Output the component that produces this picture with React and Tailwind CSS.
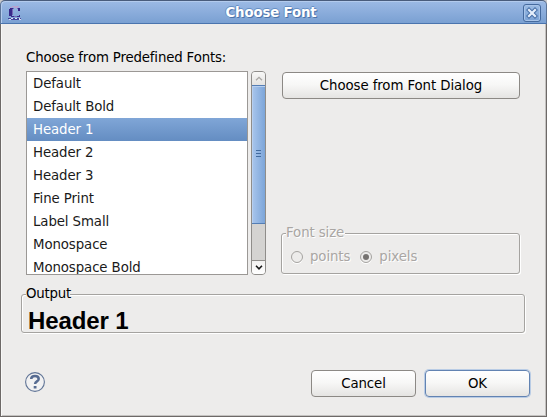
import React from "react";

const fonts = [
  "Default",
  "Default Bold",
  "Header 1",
  "Header 2",
  "Header 3",
  "Fine Print",
  "Label Small",
  "Monospace",
  "Monospace Bold",
];

function TitleBar() {
  return (
    <header className="flex h-6 shrink-0 items-center rounded-t-[5px] border border-b-[#4a74ae] border-t-[#495c7c] border-x-[#5c7599] bg-linear-to-b from-[#9cbae5] to-[#7aa0d2] pl-[7px] pr-[5px] shadow-[inset_1px_1px_0_#b3cbed]">
      <svg className="mt-px h-[14px] w-[14px] shrink-0" viewBox="0 0 14 14" shapeRendering="crispEdges">
        <path d="M4 0h7v1H4zM2 1h2v1H2zM6 1h4v1H6z" fill="#b7a2d0" />
        <path d="M1 3h3v7H1zM2 2h3v1H2zM10 2h2v3h-2zM3 10h3v1H3zM9 10h3v1H9zM11 9h1v1h-1z" fill="#38298a" />
        <path d="M5 2h1v1H5zM4 3h1v6H4zM9 2h1v1H9zM6 10h3v1H6z" fill="#7568b5" />
        <path d="M0 12h3v1H0zM5 12h2v1H5zM9 12h2v1H9zM12 12h1v1h-1zM3 13h8v1H3z" fill="#43469b" />
        <path d="M3 12h2v1H3zM7 12h2v1H7zM11 12h1v1h-1zM1 13h2v1H1zM11 13h2v1h-2z" fill="#d7dcf1" />
      </svg>
      <h1 className="relative top-px mr-[3px] flex-1 text-center text-[13.33px] leading-[22px] font-bold tracking-[-0.15px] text-white [text-shadow:1px_1px_0_#4c73a9,-1px_0_0_#668fc5,0_-1px_0_#668fc5]">
        Choose Font
      </h1>
      <button aria-label="Close" className="mt-px flex size-[18px] items-center justify-center rounded-[3px] border border-[#456a9e] bg-linear-to-b from-[#9bbbe4] to-[#7ba2d4] shadow-[inset_0_0_0_1px_#a8c4e9]">
        <svg className="size-3" viewBox="0 0 12 12">
          <path d="M3 3l6 6M9 3l-6 6" stroke="#476fa6" strokeWidth="4.2" strokeLinecap="square" />
          <path d="M3 3l6 6M9 3l-6 6" stroke="#e6effb" strokeWidth="2.2" strokeLinecap="square" />
        </svg>
      </button>
    </header>
  );
}

function Scrollbar() {
  return (
    <div className="ml-[3px] flex h-[204px] w-[15px] flex-col overflow-hidden rounded-[4px] border border-[#8f8d8a] bg-[#d4d3d1]">
      <div className="flex h-[13px] items-center justify-center bg-linear-to-b from-[#f8f8f7] to-[#e4e3e1]">
        <svg className="h-[5px] w-[8px]" viewBox="0 0 8 5" fill="none">
          <path d="M1 4.3L4 1.3l3 3" stroke="#aaa8a5" strokeWidth="1.3" />
        </svg>
      </div>
      <div className="-mx-px flex h-[139px] flex-col items-center justify-center gap-[2px] border border-[#547eb5] bg-linear-to-r from-[#a9c6ec] to-[#7ca5d9] pb-[2px] shadow-[inset_1px_1px_0_#b7cfef]">
        <i className="h-px w-[5px] bg-[#426b9f]" />
        <i className="h-px w-[5px] bg-[#426b9f]" />
        <i className="h-px w-[5px] bg-[#426b9f]" />
      </div>
      <div className="flex-1" />
      <div className="flex h-[14px] items-center justify-center border-t border-[#8f8d8a] bg-linear-to-b from-[#f2f1f0] to-white">
        <svg className="h-[5px] w-[8px]" viewBox="0 0 8 5" fill="none">
          <path d="M1 .8l3 3 3-3" stroke="#181818" strokeWidth="1.6" />
        </svg>
      </div>
    </div>
  );
}

function Button({ children, className }) {
  return (
    <button className={"flex h-[27px] items-center justify-center rounded-[4px] border bg-linear-to-b from-white from-0% via-[#f7f7f6] via-48% to-[#e5e4e2] to-100% tracking-[-0.09px] text-black " + className}>
      {children}
    </button>
  );
}

function Radio({ label, checked }) {
  return (
    <label className="flex items-center gap-[7px]">
      <span className="flex size-3 items-center justify-center rounded-full border border-[#a5a3a0] shadow-[0_1px_0_#fff]">
        {checked && <i className="size-[6px] rounded-full bg-[#767371]" />}
      </span>
      <span className="leading-4">{label}</span>
    </label>
  );
}

export default function App() {
  return (
    <div className="h-[417px] w-[547px] overflow-hidden bg-[#c9c9ca] font-['DejaVu_Sans',sans-serif] text-[13.33px] text-black">
      <div className="flex h-full flex-col">
        <TitleBar />
        <main className="flex flex-1 flex-col border-x border-b border-[#6d6967] bg-[#edeceb] shadow-[inset_1px_0_0_#f8f8f7,inset_-1px_-1px_0_#c4c2c0]">
          <div className="flex pl-[25px] pt-[26px]">
            <div>
              <div className="h-[21px] whitespace-nowrap leading-4 tracking-[-0.16px]">Choose from Predefined Fonts:</div>
              <div className="flex">
                <ul className="h-[204px] w-[222px] overflow-hidden border border-[#9b9895] bg-white tracking-[-0.1px] text-[#1a1a1a]">
                  {fonts.map((name) => (
                    <li
                      key={name}
                      className={
                        "h-[23px] pl-[6px] leading-[23px] " +
                        (name === "Header 1" ? "bg-linear-to-b from-[#80a6d7] to-[#648dc2] text-white" : "")
                      }
                    >
                      {name}
                    </li>
                  ))}
                </ul>
                <Scrollbar />
              </div>
            </div>
            <div className="ml-[15px] flex h-[224px] w-[239px] flex-col justify-between pt-[22px]">
              <Button className="ml-px border-[#8c8985]">Choose from Font Dialog</Button>
              <section className="h-[41px] rounded-[3px] border border-[#a5a3a0] tracking-[-0.1px] text-[#a9a6a3] shadow-[1px_1px_0_#fff,inset_1px_1px_0_#fff] [text-shadow:1px_1px_0_#fff]">
                <h2 className="-mt-[10px] ml-1 h-[18px] w-[59px] whitespace-nowrap bg-[#edeceb] leading-[18px]">Font size</h2>
                <div className="ml-[9px] mt-[7px] flex gap-[10px]">
                  <Radio label="points" />
                  <Radio label="pixels" checked />
                </div>
              </section>
            </div>
          </div>
          <section className="ml-5 mt-[19px] h-[39px] w-[504px] rounded-[3px] border border-[#a5a3a0] shadow-[1px_1px_0_#fff,inset_1px_1px_0_#fff]">
            <h2 className="-mt-[10px] ml-1 h-[18px] w-[44px] bg-[#edeceb] leading-[18px] tracking-[-0.2px]">Output</h2>
            <div className="ml-[6px] mt-[4px] font-['Liberation_Sans',Arial,sans-serif] text-[24px] font-bold leading-[28px] tracking-[-0.12px]">Header 1</div>
          </section>
          <footer className="mt-[37px] flex pl-6">
            <svg className="mt-[2px] size-5" viewBox="0 0 20 20" fill="none">
              <circle cx="10" cy="10" r="9.4" fill="#f1f1f2" stroke="#607496" strokeWidth="1.1" />
              <path d="M6.2 7C6.3 4.7 7.8 4 10 4s3.7 1 3.7 2.9c0 2.6-3.6 2.4-3.6 5.1" stroke="#566b91" strokeWidth="2.5" />
              <path d="M8.7 14h2.8v2.5H8.7z" fill="#566b91" />
            </svg>
            <Button className="ml-[266px] w-[105px] border-[#8c8985]">Cancel</Button>
            <Button className="ml-[9px] w-[105px] border-[#6283b2] shadow-[0_0_0_1px_#b9cce5]">OK</Button>
          </footer>
        </main>
      </div>
    </div>
  );
}
